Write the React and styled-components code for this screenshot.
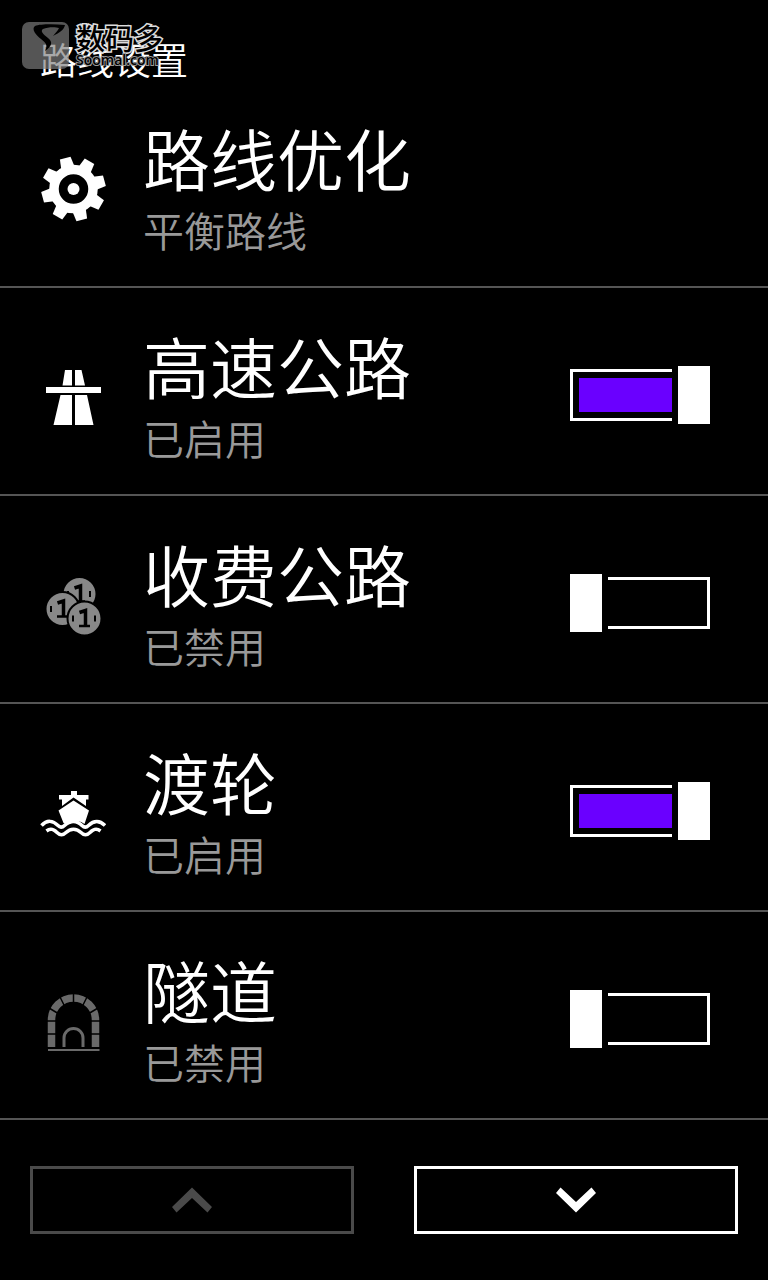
import React, { useState } from 'react'
import styled, { createGlobalStyle } from 'styled-components'

const GlobalStyle = createGlobalStyle`
    *, *::before, *::after {
        box-sizing: border-box;
    }
    body {
        margin: 0;
        background-color: #000;
        color: #fff;
        font-family: 'Noto Sans CJK SC', sans-serif;
        font-weight: 350;
    }
`;

const Page = styled.main`
    width: 100%;
    min-height: 100vh;
    background-color: #000;
`;

const Header = styled.header`
    position: relative;
    height: 80px;
    padding: 31px 40px 0;
`;

const PageTitle = styled.h1`
    margin: 0;
    font-size: 37px;
    font-weight: 350;
    line-height: 56px;
`;

const Watermark = styled.div`
    position: absolute;
    top: 22px;
    left: 22px;
    display: flex;
    gap: 6px;
    pointer-events: none;
`;

const WatermarkText = styled.div`
    color: #000;
    paint-order: stroke fill;
`;

const WatermarkName = styled.div`
    font-size: 29px;
    font-weight: 500;
    line-height: 30px;
    -webkit-text-stroke: 3px #ddd;
`;

const WatermarkSite = styled.div`
    font-family: 'Open Sans', sans-serif;
    font-size: 14px;
    font-weight: 600;
    line-height: 16px;
    -webkit-text-stroke: 2px #999;
`;

const List = styled.ul`
    margin: 0;
    padding: 0;
    list-style: none;
`;

const Row = styled.li`
    display: flex;
    align-items: center;
    height: 208px;
    padding: 12px 58px 0 40px;
    border-bottom: 2px solid #555;
`;

const RowIcon = styled.div`
    display: flex;
    flex: none;
    width: 66px;
    margin-right: 37px;
    color: ${(props) => props.$color};
`;

const Label = styled.label`
    flex: 1;
`;

const Name = styled.span`
    display: block;
    font-size: 67px;
    line-height: 80px;
`;

const Status = styled.span`
    display: block;
    color: #999;
    font-size: 41px;
    line-height: 64px;
`;

const Toggle = styled.input`
    appearance: none;
    display: flex;
    flex: none;
    align-items: center;
    gap: 6px;
    width: 140px;
    height: 58px;
    margin: 0 0 4px;
    cursor: pointer;

    &::before {
        content: '';
        width: 32px;
        height: 58px;
        background-color: #fff;
    }
    &::after {
        content: '';
        flex: 1;
        height: 52px;
        padding: 6px 0;
        border: 3px solid #fff;
        border-left: none;
    }
    &:checked {
        flex-direction: row-reverse;
    }
    &:checked::after {
        padding: 6px 0 6px 6px;
        border-left: 3px solid #fff;
        border-right: none;
        background-color: #6a00ff;
        background-clip: content-box;
    }
`;

const Footer = styled.nav`
    display: flex;
    gap: 60px;
    padding: 46px 30px;
`;

const PageButton = styled.button`
    display: flex;
    flex: 1;
    align-items: center;
    justify-content: center;
    height: 68px;
    padding: 0;
    border: 3px solid currentColor;
    background-color: transparent;
    color: #fff;
    cursor: pointer;

    &:disabled {
        color: #4a4a4a;
        cursor: default;
    }
`;

function GearIcon() {
    const teeth = [0, 45, 90, 135, 180, 225, 270, 315];
    return (
        <svg width="66" height="66" viewBox="-33.5 -33 66 66" fill="currentColor">
            {teeth.map((angle) => (
                <path key={angle} d="M-7 -20L-5.500 -32H5.500L7 -20Z" transform={`rotate(${angle - 15})`} />
            ))}
            <circle r="19.5" fill="none" stroke="currentColor" strokeWidth="9.5" />
            <circle r="6" />
        </svg>
    )
}

function MotorwayIcon() {
    return (
        <svg width="66" height="66" viewBox="0 -1 66 66" fill="currentColor">
            <path d="M25 5H32V20.500H22.500ZM35 5H41.500L45 20.500H35ZM6 22H61V28H6ZM20.500 30H32V60H13.500ZM35 30H47L53.500 60H35Z" />
        </svg>
    )
}

function Coin({ x, y }) {
    return (
        <g transform={`translate(${x} ${y})`}>
            <circle r="17" fill="currentColor" stroke="#000" strokeWidth="2" />
            <path d="M-11.500 -3V3M10.500 -3V3" stroke="#000" strokeWidth="2" />
            <path d="M-5 -6L1 -8V7.500" fill="none" stroke="#000" strokeWidth="3.5" />
            <path d="M-5.500 7.500H5.500" stroke="#000" strokeWidth="2.5" />
        </g>
    )
}

function CoinsIcon() {
    return (
        <svg width="66" height="66" viewBox="0 -1 66 66">
            <Coin x={39.500} y={21} />
            <Coin x={22.500} y={36} />
            <Coin x={44.500} y={45.500} />
        </svg>
    )
}

function FerryIcon() {
    return (
        <svg width="66" height="66" viewBox="0 0 66 66" fill="currentColor">
            <path d="M31 11H37V15H48.500V19.500H46V26L33.500 17.500L22 26V19.500H19V15H31Z" />
            <path d="M33.500 20.500L49 30.500L44.500 44Q39 39.500 33.500 42.500Q28 45 23.500 43L18.500 30.500Z" />
            <path
                d="M1.500 45.500C7 39.500 13 40.500 18 45.500C20 47.500 22 48 24.500 45.500C30 40 37 40 42 45.500C44.500 48 46.500 47.500 48.500 45.500C54 40 60 40.500 65 45.500M6.500 51C11 47.500 14 49.500 17 52.500C20 55.500 23 55.500 26 52.500C30.500 48 36.500 48 41 52.500C44 55.500 47 55.500 50 52.500C53 49.500 56 47.500 60.500 51"
                fill="none"
                stroke="currentColor"
                strokeWidth="3.5"
            />
        </svg>
    )
}

function TunnelIcon() {
    return (
        <svg width="66" height="66" viewBox="0 0 66 66" fill="none" stroke="currentColor">
            <path d="M11.500 59V32A22 22 0 0 1 55.500 32V59" strokeWidth="7.5" />
            <path d="M7 33H17M7 46H17M50 33H60M50 46H60M33.500 6V18M20 9L25 19M47 9L42 19M9 20L19 26M58 20L48 26" stroke="#000" strokeWidth="1.5" />
            <path d="M24 59V50A9.500 9.500 0 0 1 43 50V59" strokeWidth="3" />
            <path d="M8 62H59.500" strokeWidth="2" />
        </svg>
    )
}

function WatermarkLogo() {
    return (
        <svg width="48" height="48" viewBox="0 0 48 48">
            <rect width="47" height="47" rx="7" fill="#7f7f7f" fillOpacity="0.67" />
            <path d="M43 3C32 2 18 2 13 4C9 7 14 13 19 17C24 21 26 23 23 29C30 24 31 20 26 16C21 12 18 9 21 7C26 5 33 5 37 6C36 9 33 11 31 14C37 11 42 8 43 3Z" fill="#000" />
        </svg>
    )
}

function Chevron({ down }) {
    return (
        <svg width="42" height="26" viewBox="0 0 42 26" fill="currentColor">
            <path d={down ? 'M1 6L5.500 0.500L21 15L36.500 0.500L41 6L21 25.500Z' : 'M1 20L21 0.500L41 20L36.500 25.500L21 11L5.500 25.500Z'} />
        </svg>
    )
}

const OPTIONS = [
    { id: 'motorway', name: '高速公路', Icon: MotorwayIcon, dim: '#777', on: true },
    { id: 'toll', name: '收费公路', Icon: CoinsIcon, dim: '#888', on: false },
    { id: 'ferry', name: '渡轮', Icon: FerryIcon, dim: '#777', on: true },
    { id: 'tunnel', name: '隧道', Icon: TunnelIcon, dim: '#6a6a6a', on: false },
];

export default function App() {
    const [options, setOptions] = useState(OPTIONS);

    const flip = (id) => {
        setOptions(options.map((o) => (o.id === id ? { ...o, on: !o.on } : o)));
    };

    return (
        <Page>
            <GlobalStyle />
            <Header>
                <PageTitle>路线设置</PageTitle>
                <Watermark>
                    <WatermarkLogo />
                    <WatermarkText>
                        <WatermarkName>数码多</WatermarkName>
                        <WatermarkSite>Soomal.com</WatermarkSite>
                    </WatermarkText>
                </Watermark>
            </Header>
            <List>
                <Row>
                    <RowIcon $color="#fff"><GearIcon /></RowIcon>
                    <div>
                        <Name>路线优化</Name>
                        <Status>平衡路线</Status>
                    </div>
                </Row>
                {options.map(({ id, name, Icon, dim, on }) => (
                    <Row key={id}>
                        <RowIcon $color={on ? '#fff' : dim}><Icon /></RowIcon>
                        <Label htmlFor={id}>
                            <Name>{name}</Name>
                            <Status>{on ? '已启用' : '已禁用'}</Status>
                        </Label>
                        <Toggle type="checkbox" id={id} checked={on} onChange={() => flip(id)} />
                    </Row>
                ))}
            </List>
            <Footer>
                <PageButton disabled aria-label="上一页"><Chevron /></PageButton>
                <PageButton aria-label="下一页"><Chevron down /></PageButton>
            </Footer>
        </Page>
    )
}
